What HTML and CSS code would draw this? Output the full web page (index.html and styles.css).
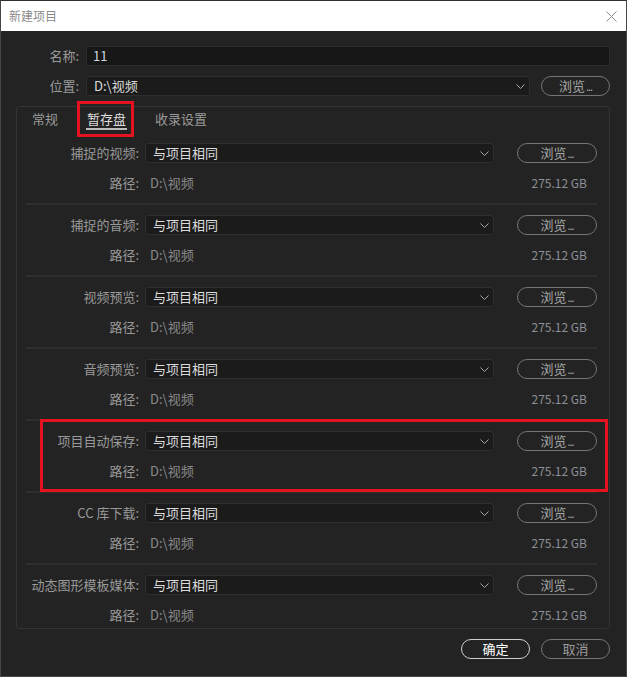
FILE: index.html
```html
<!DOCTYPE html>
<html lang="zh-CN">
<head>
<meta charset="utf-8">
<title>新建项目</title>
<link rel="stylesheet" href="styles.css">
</head>
<body>
<div class="window">
  <div class="titlebar">
    <span class="title">新建项目</span>
    <svg class="close" width="11" height="11" viewBox="0 0 11 11"><path d="M0.5 0.5 L10.5 10.5 M10.5 0.5 L0.5 10.5" stroke="#8c8c8c" stroke-width="1" fill="none"/></svg>
  </div>
  <div class="form">
    <div class="field-row">
      <span class="field-label">名称:</span>
      <div class="input">11</div>
    </div>
    <div class="field-row">
      <span class="field-label">位置:</span>
      <div class="select grow"><span class="val">D:\视频</span><svg class="chev" width="9" height="5" viewBox="0 0 9 5"><polyline points="0.5,0.5 4.5,4.5 8.5,0.5" stroke="#aaa" fill="none"/></svg></div>
      <div class="btn browse loc">浏览<span class="dots">...</span></div>
    </div>
    <div class="panel">
      <div class="tabs">
        <span class="tab">常规</span>
        <span class="tab active">暂存盘</span>
        <span class="tab">收录设置</span>
      </div>
      <div class="section">
        <div class="row"><span class="label">捕捉的视频:</span><div class="select"><span class="val">与项目相同</span><svg class="chev" width="9" height="5" viewBox="0 0 9 5"><polyline points="0.5,0.5 4.5,4.5 8.5,0.5" stroke="#aaa" fill="none"/></svg></div><div class="btn browse">浏览<span class="dots">...</span></div></div>
        <div class="row"><span class="label">路径:</span><span class="path">D:\视频</span><span class="size">275.12 GB</span></div>
      </div>
      <div class="section">
        <div class="row"><span class="label">捕捉的音频:</span><div class="select"><span class="val">与项目相同</span><svg class="chev" width="9" height="5" viewBox="0 0 9 5"><polyline points="0.5,0.5 4.5,4.5 8.5,0.5" stroke="#aaa" fill="none"/></svg></div><div class="btn browse">浏览<span class="dots">...</span></div></div>
        <div class="row"><span class="label">路径:</span><span class="path">D:\视频</span><span class="size">275.12 GB</span></div>
      </div>
      <div class="section">
        <div class="row"><span class="label">视频预览:</span><div class="select"><span class="val">与项目相同</span><svg class="chev" width="9" height="5" viewBox="0 0 9 5"><polyline points="0.5,0.5 4.5,4.5 8.5,0.5" stroke="#aaa" fill="none"/></svg></div><div class="btn browse">浏览<span class="dots">...</span></div></div>
        <div class="row"><span class="label">路径:</span><span class="path">D:\视频</span><span class="size">275.12 GB</span></div>
      </div>
      <div class="section">
        <div class="row"><span class="label">音频预览:</span><div class="select"><span class="val">与项目相同</span><svg class="chev" width="9" height="5" viewBox="0 0 9 5"><polyline points="0.5,0.5 4.5,4.5 8.5,0.5" stroke="#aaa" fill="none"/></svg></div><div class="btn browse">浏览<span class="dots">...</span></div></div>
        <div class="row"><span class="label">路径:</span><span class="path">D:\视频</span><span class="size">275.12 GB</span></div>
      </div>
      <div class="section">
        <div class="row"><span class="label">项目自动保存:</span><div class="select"><span class="val">与项目相同</span><svg class="chev" width="9" height="5" viewBox="0 0 9 5"><polyline points="0.5,0.5 4.5,4.5 8.5,0.5" stroke="#aaa" fill="none"/></svg></div><div class="btn browse">浏览<span class="dots">...</span></div></div>
        <div class="row"><span class="label">路径:</span><span class="path">D:\视频</span><span class="size">275.12 GB</span></div>
      </div>
      <div class="section">
        <div class="row"><span class="label">CC 库下载:</span><div class="select"><span class="val">与项目相同</span><svg class="chev" width="9" height="5" viewBox="0 0 9 5"><polyline points="0.5,0.5 4.5,4.5 8.5,0.5" stroke="#aaa" fill="none"/></svg></div><div class="btn browse">浏览<span class="dots">...</span></div></div>
        <div class="row"><span class="label">路径:</span><span class="path">D:\视频</span><span class="size">275.12 GB</span></div>
      </div>
      <div class="section last">
        <div class="row"><span class="label">动态图形模板媒体:</span><div class="select"><span class="val">与项目相同</span><svg class="chev" width="9" height="5" viewBox="0 0 9 5"><polyline points="0.5,0.5 4.5,4.5 8.5,0.5" stroke="#aaa" fill="none"/></svg></div><div class="btn browse">浏览<span class="dots">...</span></div></div>
        <div class="row"><span class="label">路径:</span><span class="path">D:\视频</span><span class="size">275.12 GB</span></div>
      </div>
    </div>
    <div class="actions">
      <div class="btn ok">确定</div>
      <div class="btn cancel">取消</div>
    </div>
  </div>
  <div class="mark mark-tab"></div>
  <div class="mark mark-section"></div>
</div>
</body>
</html>
```
FILE: styles.css
```css
html, body {
  margin: 0;
  padding: 0;
  background: #232323;
}
body {
  font-family: "Noto Sans CJK SC", "Noto Sans", sans-serif;
  font-size: 13px;
}
.window {
  position: relative;
  width: 627px;
  height: 677px;
  box-sizing: border-box;
  border: 1px solid #464646;
  border-top-color: #2e2e2e;
  background: #232323;
  overflow: hidden;
}
.titlebar {
  height: 30px;
  background: #ffffff;
  display: flex;
  align-items: center;
  justify-content: space-between;
  padding: 0 9px 0 8px;
}
.title {
  font-size: 12px;
  color: #8a8a8a;
  line-height: 16px;
}
.close {
  display: block;
}
.form {
  padding: 15px 16px 0 15px;
}
.field-row {
  display: flex;
  align-items: center;
  gap: 7px;
  height: 20px;
  margin-bottom: 10px;
}
.field-label {
  width: 63px;
  text-align: right;
  color: #9a9a9a;
  line-height: 18px;
  flex: none;
}
.input {
  flex: 1;
  height: 20px;
  box-sizing: border-box;
  background: #171717;
  border: 1px solid #2d2d2d;
  border-radius: 3px;
  padding: 0 7px 0 6px;
  color: #cdd6df;
  line-height: 18px;
}
.select {
  height: 20px;
  box-sizing: border-box;
  background: #1b1b1b;
  border: 1px solid #2e2e2e;
  border-radius: 3px;
  padding: 0 4px 0 7px;
  display: flex;
  align-items: center;
  justify-content: space-between;
  color: #dcdcdc;
  line-height: 18px;
}
.select.grow {
  flex: 1;
}
.chev {
  display: block;
  flex: none;
}
.btn {
  height: 20px;
  box-sizing: border-box;
  border: 1px solid #757575;
  border-radius: 10px;
  color: #a6a6a6;
  text-align: center;
  line-height: 17px;
  flex: none;
}
.dots {
  font-size: 11px;
  letter-spacing: -1px;
  margin-left: 1px;
}
.browse.loc {
  width: 69px;
  margin-left: 4px;
}
.panel {
  border: 1px solid #343434;
  border-radius: 3px;
}
.tabs {
  display: flex;
  gap: 27px;
  padding: 3px 0 0 14px;
  margin-bottom: 3px;
}
.tab {
  padding: 0 1px;
  line-height: 18px;
  color: #9a9a9a;
  border-bottom: 2px solid transparent;
}
.tab.active {
  color: #dedede;
  border-bottom-color: #bdbdbd;
}
.section {
  margin: 0 12px 0 9px;
  padding: 10px 0;
  border-bottom: 2px solid #2f2f2f;
}
.section:first-of-type {
  padding-top: 10px;
}
.section.last {
  border-bottom: none;
  padding-bottom: 3px;
}
.row {
  display: flex;
  align-items: center;
  height: 20px;
}
.row + .row {
  margin-top: 10px;
}
.label {
  width: 113px;
  flex: none;
  text-align: right;
  color: #999999;
  line-height: 18px;
  white-space: nowrap;
}
.row .select {
  width: 349px;
  margin-left: 6px;
  flex: none;
}
.row .browse {
  width: 80px;
  margin-left: 23px;
}
.path {
  flex: 1;
  margin-left: 11px;
  color: #8a8a8a;
  line-height: 18px;
}
.size {
  margin-right: 10px;
  font-size: 12px;
  color: #8b9098;
  line-height: 18px;
}
.actions {
  display: flex;
  justify-content: flex-end;
  gap: 11px;
  margin-top: 10px;
}
.actions .btn {
  width: 69px;
}
.btn.ok {
  border-color: #cfcfcf;
  color: #ffffff;
}
.btn.cancel {
  color: #9a9a9a;
}
.mark {
  position: absolute;
  box-sizing: border-box;
  border: 3px solid #e3141d;
}
.mark-tab {
  left: 76px;
  top: 100px;
  width: 57px;
  height: 36px;
}
.mark-section {
  left: 39px;
  top: 418px;
  width: 568px;
  height: 73px;
}
```
